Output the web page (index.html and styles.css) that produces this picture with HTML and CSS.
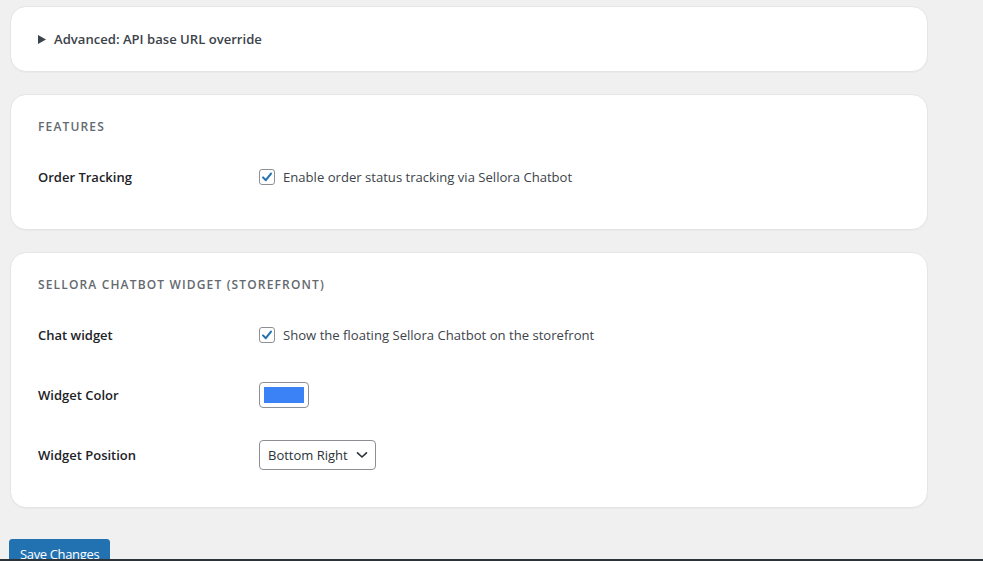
FILE: index.html
```html
<!DOCTYPE html>
<html lang="en">
<head>
<meta charset="utf-8">
<title>Sellora Chatbot Settings</title>
<link rel="stylesheet" href="styles.css">
</head>
<body>
<div class="wrap">
  <section class="card card-summary">
    <div class="summary">
      <svg class="tri" width="8" height="9" viewBox="0 0 8 9"><path d="M0 0 L8 4.5 L0 9 Z" fill="#3c434a"/></svg>
      <span>Advanced: API base URL override</span>
    </div>
  </section>

  <section class="card">
    <h2 class="card-title">Features</h2>
    <div class="row">
      <div class="label">Order Tracking</div>
      <label class="field check">
        <span class="box"><svg width="14" height="14" viewBox="0 0 14 14"><path d="M3 7.4 L5.8 10.2 L11 3.6" fill="none" stroke="#2271b1" stroke-width="2" stroke-linecap="round" stroke-linejoin="round"/></svg></span>
        <span>Enable order status tracking via Sellora Chatbot</span>
      </label>
    </div>
  </section>

  <section class="card">
    <h2 class="card-title">Sellora Chatbot Widget (Storefront)</h2>
    <div class="row">
      <div class="label">Chat widget</div>
      <label class="field check">
        <span class="box"><svg width="14" height="14" viewBox="0 0 14 14"><path d="M3 7.4 L5.8 10.2 L11 3.6" fill="none" stroke="#2271b1" stroke-width="2" stroke-linecap="round" stroke-linejoin="round"/></svg></span>
        <span>Show the floating Sellora Chatbot on the storefront</span>
      </label>
    </div>
    <div class="row">
      <div class="label">Widget Color</div>
      <div class="field"><span class="color"><span class="swatch"></span></span></div>
    </div>
    <div class="row">
      <div class="label">Widget Position</div>
      <div class="field">
        <span class="select">
          <span>Bottom Right</span>
          <svg width="12" height="8" viewBox="0 0 12 8"><path d="M1.5 1.8 L6 6 L10.5 1.8" fill="none" stroke="#2c3338" stroke-width="1.6" stroke-linecap="round" stroke-linejoin="round"/></svg>
        </span>
      </div>
    </div>
  </section>

  <button class="save" type="button">Save Changes</button>
</div>
<div class="bottom-line"></div>
</body>
</html>
```
FILE: styles.css
```css
html, body {
  margin: 0;
  padding: 0;
  background: #f0f0f1;
  height: 100%;
  overflow: hidden;
}
body {
  font-family: "Open Sans", "Noto Sans", Arial, sans-serif;
  font-size: 13px;
  color: #3c434a;
}
.wrap {
  width: 918px;
  padding: 6px 0 0 10px;
  display: flex;
  flex-direction: column;
  gap: 22px;
}
.card {
  background: #fff;
  border: 1px solid #e4e5e7;
  border-radius: 16px;
  padding: 23px 27px 22px;
  box-shadow: 0 1px 1px rgba(0,0,0,0.03);
}
.card-summary {
  padding-bottom: 23px;
}
.summary {
  display: flex;
  align-items: center;
  gap: 8px;
  height: 18px;
  font-weight: 600;
  font-size: 13.1px;
  color: #3c434a;
}
.tri { display: block; }
.card-title {
  margin: 0 0 11px;
  height: 18px;
  line-height: 18px;
  font-size: 12px;
  font-weight: 600;
  text-transform: uppercase;
  letter-spacing: 1.15px;
  color: #646970;
}
.row {
  display: grid;
  grid-template-columns: 221px 1fr;
  align-items: center;
  height: 60px;
}
.label {
  font-weight: 600;
  font-size: 13px;
  color: #1d2327;
}
.field { display: flex; align-items: center; }
.check { gap: 8px; color: #3c434a; font-size: 13.1px; }
.box {
  width: 14px;
  height: 14px;
  border: 1px solid #8c8f94;
  border-radius: 3px;
  display: flex;
  align-items: center;
  justify-content: center;
  background: #fff;
}
.box svg { display: block; }
.color {
  box-sizing: border-box;
  width: 50px;
  height: 26px;
  border: 1px solid #8c8f94;
  border-radius: 4px;
  padding: 4px;
  display: flex;
}
.swatch {
  flex: 1;
  background: #3b82f6;
}
.select {
  box-sizing: border-box;
  height: 30px;
  width: 117px;
  border: 1px solid #8c8f94;
  border-radius: 4px;
  padding: 0 7px 0 8px;
  display: flex;
  align-items: center;
  justify-content: space-between;
  color: #2c3338;
  background: #fff;
}
.select svg { display: block; }
.save {
  align-self: flex-start;
  margin: 9px 0 0 -1px;
  height: 30px;
  padding: 0 10px;
  border: 1px solid #2271b1;
  border-radius: 3px;
  background: #2271b1;
  color: #fff;
  font-family: "Open Sans", "Noto Sans", Arial, sans-serif;
  font-size: 13px;
  letter-spacing: -0.35px;
}
.bottom-line {
  position: fixed;
  left: 0;
  right: 0;
  bottom: 0;
  height: 2px;
  background: #2c3338;
}
```
